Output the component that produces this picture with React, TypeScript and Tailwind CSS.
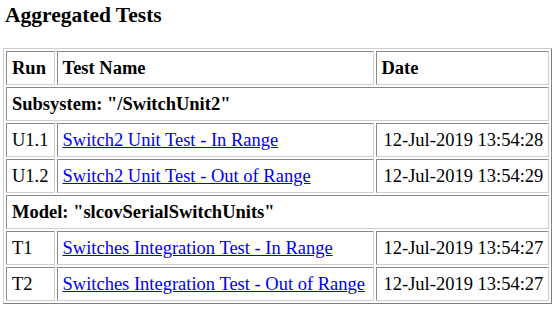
const rows = [
  { group: 'Subsystem: "/SwitchUnit2"' },
  { run: "U1.1", name: "Switch2 Unit Test - In Range", date: "12-Jul-2019 13:54:28" },
  { run: "U1.2", name: "Switch2 Unit Test - Out of Range", date: "12-Jul-2019 13:54:29" },
  { group: 'Model: "slcovSerialSwitchUnits"' },
  { run: "T1", name: "Switches Integration Test - In Range", date: "12-Jul-2019 13:54:27" },
  { run: "T2", name: "Switches Integration Test - Out of Range", date: "12-Jul-2019 13:54:27" },
];

const cell =
  "border border-t-[#8a8a8a] border-l-[#8a8a8a] border-b-[#cfcfcf] border-r-[#cfcfcf] px-[5px] py-[6px] leading-[20px] text-left align-middle whitespace-nowrap";

export default function App() {
  return (
    <div className="bg-white min-h-[315px] px-[3px] text-black font-['Liberation_Serif',serif] text-[18.5px]">
      <h3 className="pt-[3px] pl-[2px] text-[21.5px] leading-[25px] font-bold mb-[20px]">Aggregated Tests</h3>
      <table className="border-separate border-spacing-[2px] border border-t-[#cfcfcf] border-l-[#cfcfcf] border-b-[#808080] border-r-[#808080]">
        <thead>
          <tr>
            <th className={`${cell} w-[48px] font-bold`}>Run</th>
            <th className={`${cell} w-[317px] font-bold`}>Test Name</th>
            <th className={`${cell} w-[170px] font-bold`}>Date</th>
          </tr>
        </thead>
        <tbody>
          {rows.map((r, i) =>
            r.group ? (
              <tr key={i}>
                <td colSpan={3} className={`${cell} font-bold`}>
                  {r.group}
                </td>
              </tr>
            ) : (
              <tr key={i}>
                <td className={cell}>{r.run}</td>
                <td className={cell}>
                  <a href="#" className="text-[#0000ee] underline">
                    {r.name}
                  </a>
                </td>
                <td className={`${cell} pl-[7px]`}>{r.date}</td>
              </tr>
            )
          )}
        </tbody>
      </table>
    </div>
  );
}
